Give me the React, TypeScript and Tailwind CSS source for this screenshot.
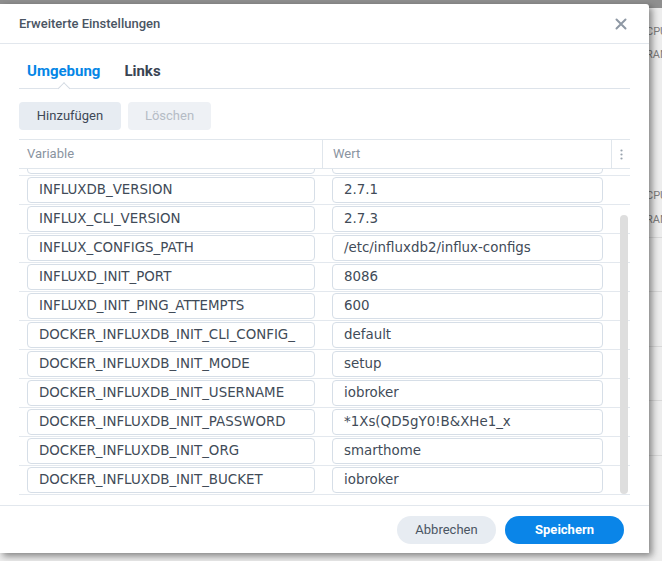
import React from "react";

const rows: [string, string][] = [
  ["", ""],
  ["INFLUXDB_VERSION", "2.7.1"],
  ["INFLUX_CLI_VERSION", "2.7.3"],
  ["INFLUX_CONFIGS_PATH", "/etc/influxdb2/influx-configs"],
  ["INFLUXD_INIT_PORT", "8086"],
  ["INFLUXD_INIT_PING_ATTEMPTS", "600"],
  ["DOCKER_INFLUXDB_INIT_CLI_CONFIG_", "default"],
  ["DOCKER_INFLUXDB_INIT_MODE", "setup"],
  ["DOCKER_INFLUXDB_INIT_USERNAME", "iobroker"],
  ["DOCKER_INFLUXDB_INIT_PASSWORD", "*1Xs(QD5gY0!B&XHe1_x"],
  ["DOCKER_INFLUXDB_INIT_ORG", "smarthome"],
  ["DOCKER_INFLUXDB_INIT_BUCKET", "iobroker"],
];

const ui = { fontFamily: "Roboto, 'Noto Sans', sans-serif" };
const mono = { fontFamily: "'DejaVu Sans', Verdana, sans-serif" };

const Field = ({ value, w }: { value: string; w: string }) => (
  <div
    className={`${w} h-[26px] border border-[#d6dee7] rounded-[4px] pl-[11px] pr-[8px] flex items-center text-[13.4px] text-[#414b58] whitespace-nowrap overflow-hidden`}
    style={mono}
  >
    {value}
  </div>
);

const Background = () => (
  <div className="w-full h-full bg-[#ededed] text-[11px] text-[#7d7d7d]" style={ui}>
    <div className="h-[8px] bg-[#8f8f8f]" />
    <div className="pl-[646px]">
      <div className="pt-[12px] leading-[23px]">
        <div>CPU</div>
        <div>RAM</div>
      </div>
      <div className="mt-[118px] leading-[24px]">
        <div>CPU</div>
        <div>RAM</div>
      </div>
      <div className="mt-[5px] border-t border-[#d8d8d8] h-[54px]" />
      <div className="border-t border-[#d8d8d8] h-[55px]" />
      <div className="border-t border-[#d8d8d8] h-[54px]" />
      <div className="border-t border-[#d8d8d8] h-[55px]" />
      <div className="border-t border-[#d8d8d8] h-[55px]" />
    </div>
  </div>
);

export default function App() {
  return (
    <div className="relative w-[662px] h-[561px] overflow-hidden">
      <Background />

      <div
        className="absolute left-0 top-[4px] w-[649px] h-[549px] bg-white flex flex-col rounded-tr-[3px] shadow-[3px_3px_7px_rgba(0,0,0,0.45)]"
        style={ui}
      >
        {/* header */}
        <div className="h-[40px] shrink-0 flex items-center justify-between pl-[19px] pr-[22px] border-b border-[#e2e7ed]">
          <span className="text-[13px] font-medium text-[#4a5563]">Erweiterte Einstellungen</span>
          <svg width="12" height="12" viewBox="0 0 12 12">
            <path d="M1.5 1.5 L10.5 10.5 M10.5 1.5 L1.5 10.5" stroke="#8e98a4" strokeWidth="2" strokeLinecap="round" />
          </svg>
        </div>

        {/* tabs */}
        <div className="mx-[19px] pt-[18px] pb-[8px] border-b border-[#dde3ea] flex gap-[24px] pl-[8px] text-[15px] font-bold leading-[18px]">
          <div className="relative text-[#0586e6]">
            Umgebung
            <span className="absolute left-1/2 -translate-x-1/2 -bottom-[13px] w-[9px] h-[9px] rotate-45 bg-white border-l border-t border-[#d3dae2]" />
          </div>
          <div className="text-[#3a4452]">Links</div>
        </div>

        {/* toolbar */}
        <div className="mx-[19px] mt-[13px] flex gap-[7px] text-[13px]">
          <button className="w-[102px] h-[28px] rounded-[4px] bg-[#e7ecf2] text-[#3e4856]">Hinzufügen</button>
          <button className="w-[83px] h-[28px] rounded-[4px] bg-[#eef1f5] text-[#b5bcc5]">Löschen</button>
        </div>

        {/* table */}
        <div className="mx-[19px] mt-[9px] border-t border-[#e0e6ec]">
          <div className="flex h-[29px] border-b border-[#e0e6ec] text-[13px] text-[#8a949f]">
            <div className="w-[304px] pl-[8px] flex items-center border-r border-[#e0e6ec]">Variable</div>
            <div className="w-[289px] pl-[10px] flex items-center border-r border-[#e0e6ec]">Wert</div>
            <div className="flex-1 flex items-center justify-center">
              <svg width="3" height="11" viewBox="0 0 3 11">
                <circle cx="1.5" cy="1.5" r="1.1" fill="#98a2ad" />
                <circle cx="1.5" cy="5.5" r="1.1" fill="#98a2ad" />
                <circle cx="1.5" cy="9.5" r="1.1" fill="#98a2ad" />
              </svg>
            </div>
          </div>

          <div className="relative h-[326px] overflow-hidden">
            <div className="-mt-[22px]">
              {rows.map(([k, v], i) => (
                <div key={i} className="h-[29px] flex items-center border-b border-[#e3e8ee]">
                  <div className="w-[304px] pl-[8px]">
                    <Field value={k} w="w-[288px]" />
                  </div>
                  <div className="pl-[9px]">
                    <Field value={v} w="w-[271px]" />
                  </div>
                </div>
              ))}
            </div>
            <div className="absolute right-[2px] top-[46px] bottom-[1px] w-[8px] rounded-full bg-[#dedede]" />
          </div>
        </div>

        {/* footer */}
        <div className="mt-auto h-[48px] border-t border-[#e2e7ed] flex items-center justify-end gap-[9px] pr-[25px] text-[13px]">
          <button className="w-[99px] h-[28px] rounded-full bg-[#e7ecf2] text-[#4a5563]">Abbrechen</button>
          <button className="w-[119px] h-[28px] rounded-full bg-[#0a85e8] text-white font-bold">Speichern</button>
        </div>
      </div>
    </div>
  );
}
